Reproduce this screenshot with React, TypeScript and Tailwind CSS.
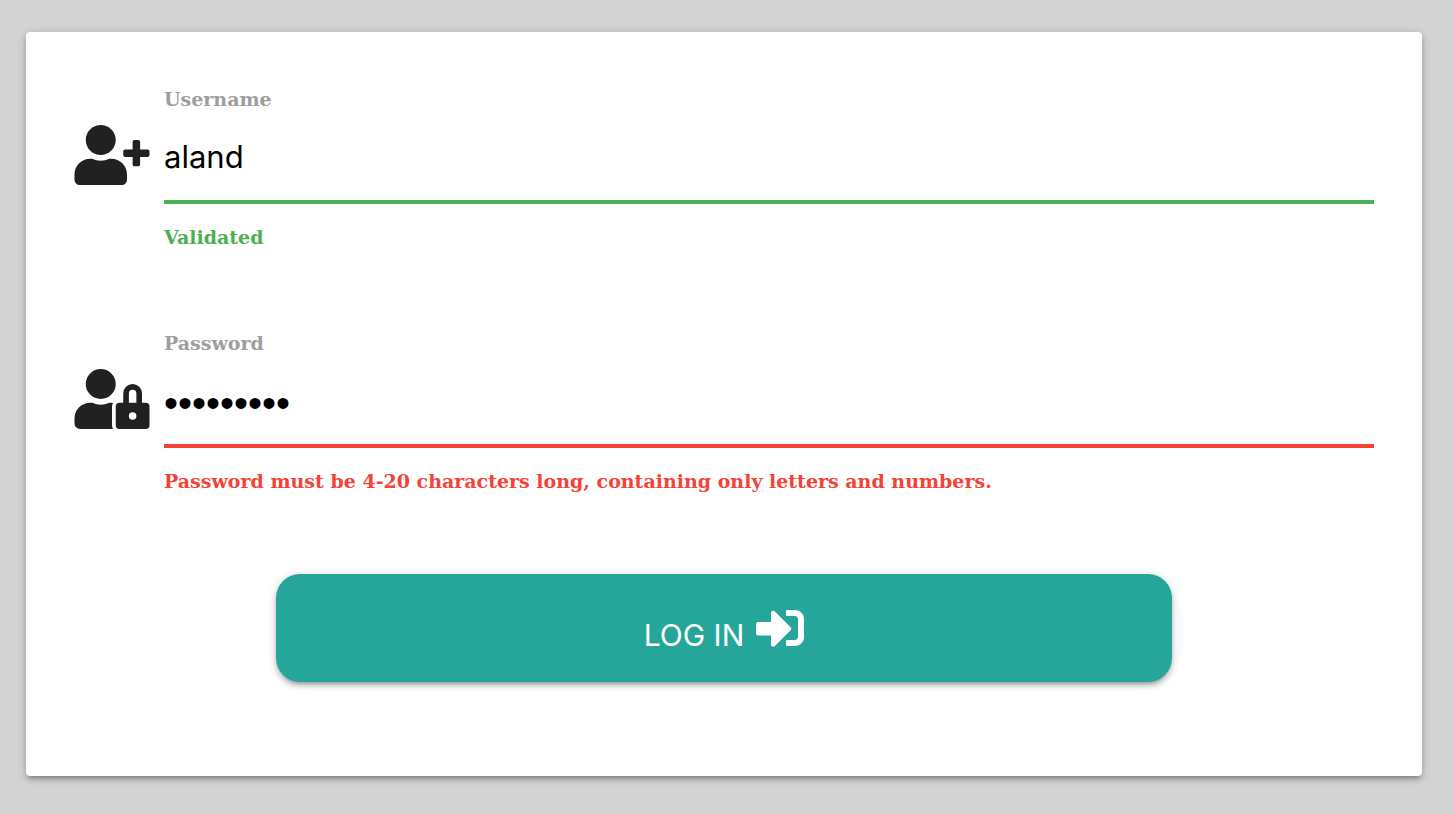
import { useState } from "react";
import type { ReactNode } from "react";
import { FaSignInAlt, FaUserLock, FaUserPlus } from "react-icons/fa";

type FieldProps = {
  id: string;
  label: string;
  type: "text" | "password";
  initial: string;
  message: string;
  valid: boolean;
  icon: ReactNode;
};

function Field({ id, label, type, initial, message, valid, icon }: FieldProps) {
  const [value, setValue] = useState(initial);
  return (
    <div className="grid grid-cols-[76px_1fr] gap-x-3.5">
      <div className="pt-10 text-[#212121]">{icon}</div>
      <div className="flex flex-col">
        <label
          htmlFor={id}
          className="font-['DejaVu_Serif',serif] text-[19px] leading-7 font-bold text-[#9e9e9e]"
        >
          {label}
        </label>
        <input
          id={id}
          type={type}
          value={value}
          onChange={(e) => setValue(e.target.value)}
          aria-describedby={`${id}-message`}
          aria-invalid={!valid}
          className={`h-[91px] w-full border-b-4 bg-transparent text-black outline-none ${
            type === "password"
              ? "pt-1.5 font-['Liberation_Sans',sans-serif] text-[40px]"
              : "text-[31px]"
          } ${valid ? "border-[#4caf50]" : "border-[#f44336]"}`}
        />
        <p
          id={`${id}-message`}
          className={`mt-[19px] font-['DejaVu_Serif',serif] text-[19px] leading-7 font-bold ${
            valid ? "text-[#4caf50]" : "text-[#f44336]"
          }`}
        >
          {message}
        </p>
      </div>
    </div>
  );
}

export default function App() {
  return (
    <main className="min-h-screen bg-[#d3d3d3] px-8 pt-8 pb-[38px] pl-[26px] font-['Inter',sans-serif]">
      <form
        onSubmit={(e) => e.preventDefault()}
        className="rounded bg-white px-12 pt-[53px] pb-[94px] shadow-[0_4px_4px_0_rgba(0,0,0,0.14),0_6px_2px_-4px_rgba(0,0,0,0.12),0_2px_10px_0_rgba(0,0,0,0.2)]"
      >
        <div className="flex flex-col gap-[78px]">
          <Field
            id="username"
            label="Username"
            type="text"
            initial="aland"
            message="Validated"
            valid
            icon={<FaUserPlus className="h-[60px] w-[76px]" />}
          />
          <Field
            id="password"
            label="Password"
            type="password"
            initial="aland_123"
            message="Password must be 4-20 characters long, containing only letters and numbers."
            valid={false}
            icon={<FaUserLock className="h-[60px] w-[76px]" />}
          />
        </div>
        <div className="-mx-[22px] mt-[79px] flex justify-center">
          <button
            type="submit"
            className="flex h-[108px] w-2/3 items-center justify-center gap-3 rounded-3xl bg-[#26a69a] text-[30px] text-white shadow-[0_4px_4px_0_rgba(0,0,0,0.14),0_6px_2px_-4px_rgba(0,0,0,0.12),0_2px_10px_0_rgba(0,0,0,0.2)]"
          >
            <span className="pt-3.5">LOG IN</span>
            <FaSignInAlt className="size-12" />
          </button>
        </div>
      </form>
    </main>
  );
}
